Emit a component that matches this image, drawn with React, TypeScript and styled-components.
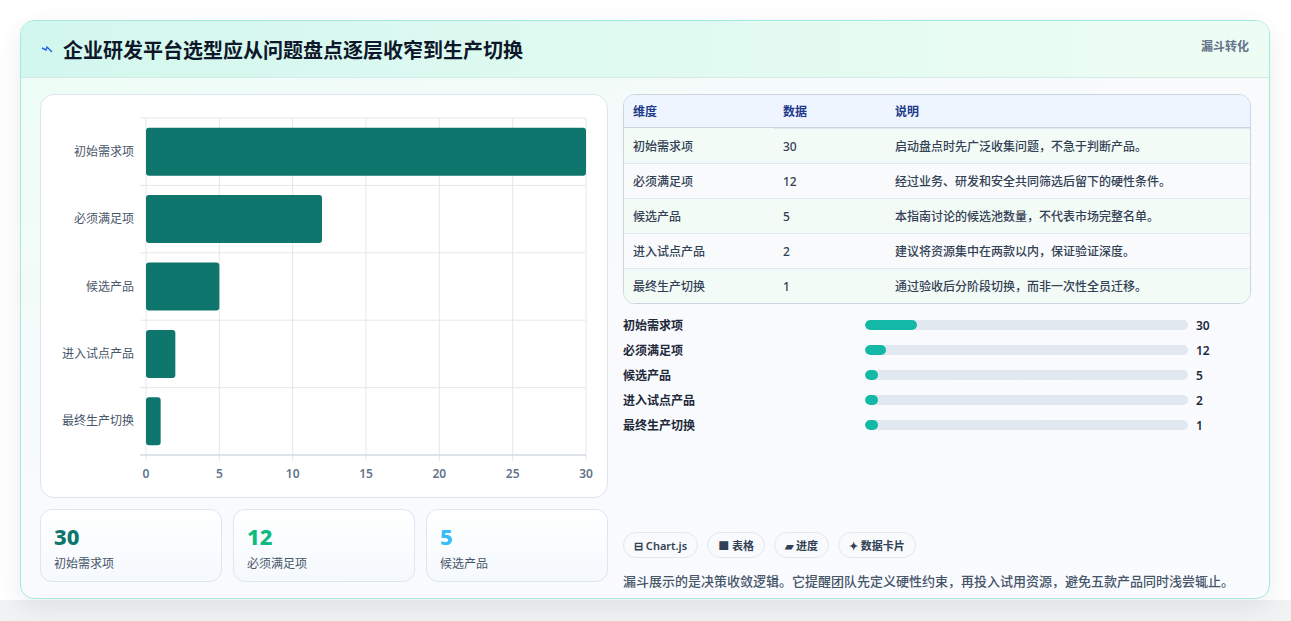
import styled, { createGlobalStyle } from 'styled-components'

const GlobalStyle = createGlobalStyle`
  body {
    margin: 0;
    background: #f1f2f4;
    font-family: "Noto Sans", "Noto Sans CJK SC", sans-serif;
  }
`

const rows = [
  { name: '初始需求项', value: 30, note: '启动盘点时先广泛收集问题，不急于判断产品。' },
  { name: '必须满足项', value: 12, note: '经过业务、研发和安全共同筛选后留下的硬性条件。' },
  { name: '候选产品', value: 5, note: '本指南讨论的候选池数量，不代表市场完整名单。' },
  { name: '进入试点产品', value: 2, note: '建议将资源集中在两款以内，保证验证深度。' },
  { name: '最终生产切换', value: 1, note: '通过验收后分阶段切换，而非一次性全员迁移。' },
]

const Page = styled.div`
  height: 621px;
  padding: 20px 20px 22px 20px;
  box-sizing: border-box;
  background: linear-gradient(#ffffff 0, #ffffff 600px, #f1f2f4 600px);
`

const Card = styled.div`
  width: 1250px;
  height: 579px;
  box-sizing: border-box;
  border: 1px solid #a7e8de;
  border-radius: 14px;
  background: linear-gradient(160deg, #ecfdf5 0%, #f8fafc 45%, #fafbff 100%);
  box-shadow: 0 8px 24px rgba(15, 23, 42, 0.08);
  overflow: hidden;
`

const Header = styled.div`
  height: 56px;
  display: flex;
  align-items: center;
  justify-content: space-between;
  padding: 0 20px;
  border-bottom: 1px solid #d4ebe6;
  background: linear-gradient(90deg, #d2f7ee, #eefdf4);
`

const Title = styled.h1`
  margin: 0;
  font-size: 20px;
  font-weight: 700;
  color: #0f172a;
  display: flex;
  align-items: center;
  gap: 10px;
`

const Tag = styled.span`
  align-self: flex-start;
  margin-top: 16px;
  font-size: 12px;
  font-weight: 700;
  color: #64748b;
`

const Body = styled.div`
  display: grid;
  grid-template-columns: 568px 628px;
  gap: 15px;
  padding: 16px 18px 0 19px;
`

const Col = styled.div`
  display: flex;
  flex-direction: column;
`

const ChartCard = styled.div`
  height: 404px;
  box-sizing: border-box;
  border: 1px solid #dbe5ef;
  border-radius: 14px;
  background: #fff;
`

const Kpis = styled.div`
  display: grid;
  grid-template-columns: repeat(3, 1fr);
  gap: 11px;
  margin-top: 11px;
`

const Kpi = styled.div`
  height: 73px;
  box-sizing: border-box;
  border: 1px solid #dbe7f3;
  border-radius: 12px;
  background: linear-gradient(#ffffff, #f5f9fd);
  padding: 12px 13px;
`

const KpiNum = styled.div<{ $c: string }>`
  font-size: 22px;
  font-weight: 800;
  line-height: 28px;
  color: ${p => p.$c};
`

const KpiLabel = styled.div`
  font-size: 12px;
  color: #475569;
  margin-top: 4px;
`

const Table = styled.table`
  width: 100%;
  border-collapse: separate;
  border-spacing: 0;
  border: 1px solid #cbd5e1;
  border-radius: 12px;
  overflow: hidden;
  font-size: 12px;
  background: #f8fafc;
`

const Th = styled.th`
  text-align: left;
  font-weight: 600;
  color: #1e3a8a;
  background: #eef5fe;
  height: 32px;
  padding: 0 9px;
  border-bottom: 1px solid #cbd5e1;
`

const Td = styled.td<{ $alt: boolean }>`
  height: 34px;
  padding: 0 9px;
  color: #334155;
  font-weight: 500;
  background: ${p => (p.$alt ? '#f8fafc' : '#f3fbf7')};
  border-top: 1px solid #e2e8f0;
`

const Progress = styled.div`
  margin-top: 12px;
  display: flex;
  flex-direction: column;
  gap: 7px;
`

const PRow = styled.div`
  display: grid;
  grid-template-columns: 234px 323px 1fr;
  column-gap: 8px;
  align-items: center;
  height: 18px;
  font-size: 12px;
  font-weight: 600;
  color: #1e293b;
`

const Track = styled.div`
  height: 10px;
  border-radius: 5px;
  background: #e2e8f0;
  overflow: hidden;
`

const Fill = styled.div`
  height: 100%;
  border-radius: 5px;
  background: #14b8a6;
`

const Chips = styled.div`
  display: flex;
  gap: 9px;
  margin-top: 98px;
`

const Chip = styled.span`
  height: 26px;
  box-sizing: border-box;
  padding: 0 10px;
  display: flex;
  align-items: center;
  gap: 4px;
  border: 1px solid #e2e8f0;
  border-radius: 13px;
  background: #f8fafc;
  font-size: 11px;
  font-weight: 600;
  color: #334155;
`

const Foot = styled.p`
  margin: 13px 0 0;
  font-size: 13px;
  font-weight: 500;
  color: #475569;
`

function BarChart() {
  const x0 = 105, x1 = 545, top = 23, bottom = 360
  const sx = (v: number) => x0 + ((x1 - x0) * v) / 30
  const band = (bottom - top) / 5
  return (
    <svg width="568" height="404" style={{ display: 'block' }}>
      {[0, 5, 10, 15, 20, 25, 30].map(t => (
        <g key={t}>
          <line x1={sx(t)} x2={sx(t)} y1={top} y2={bottom + 6} stroke="#e5e7eb" />
          <text x={sx(t)} y={383} textAnchor="middle" fontSize="12" fill="#64748b" fontWeight="600"
            fontFamily="Noto Sans, sans-serif">{t}</text>
        </g>
      ))}
      {[0, 1, 2, 3, 4, 5].map(i => (
        <line key={i} x1={x0 - 6} x2={x1} y1={top + band * i} y2={top + band * i} stroke="#e5e7eb" />
      ))}
      <line x1={x0 - 6} x2={x1} y1={bottom} y2={bottom} stroke="#cbd5e1" />
      {rows.map((r, i) => {
        const cy = top + band * i + band / 2
        return (
          <g key={r.name}>
            <rect x={x0} y={cy - 24} width={sx(r.value) - x0} height={48} rx="3" fill="#0f766e" />
            <text x={93} y={cy + 4} textAnchor="end" fontSize="12" fill="#475569"
              fontFamily="Noto Sans CJK SC, sans-serif">{r.name}</text>
          </g>
        )
      })}
    </svg>
  )
}

export default function App() {
  return (
    <Page>
      <GlobalStyle />
      <Card>
        <Header>
          <Title>
            <svg width="12" height="12" viewBox="0 0 12 12">
              <path d="M1 5 L5 7 L6 4 L11 9" stroke="#2563eb" strokeWidth="1.4" fill="none" />
            </svg>
            企业研发平台选型应从问题盘点逐层收窄到生产切换
          </Title>
          <Tag>漏斗转化</Tag>
        </Header>
        <Body>
          <Col>
            <ChartCard><BarChart /></ChartCard>
            <Kpis>
              <Kpi><KpiNum $c="#0f766e">30</KpiNum><KpiLabel>初始需求项</KpiLabel></Kpi>
              <Kpi><KpiNum $c="#10b981">12</KpiNum><KpiLabel>必须满足项</KpiLabel></Kpi>
              <Kpi><KpiNum $c="#38bdf8">5</KpiNum><KpiLabel>候选产品</KpiLabel></Kpi>
            </Kpis>
          </Col>
          <Col>
            <Table>
              <thead>
                <tr>
                  <Th style={{ width: 132 }}>维度</Th>
                  <Th style={{ width: 94 }}>数据</Th>
                  <Th>说明</Th>
                </tr>
              </thead>
              <tbody>
                {rows.map((r, i) => (
                  <tr key={r.name}>
                    <Td $alt={i % 2 === 1} style={i === 0 ? { borderTop: 'none' } : undefined}>{r.name}</Td>
                    <Td $alt={i % 2 === 1}>{r.value}</Td>
                    <Td $alt={i % 2 === 1}>{r.note}</Td>
                  </tr>
                ))}
              </tbody>
            </Table>
            <Progress>
              {rows.map(r => (
                <PRow key={r.name}>
                  <span>{r.name}</span>
                  <Track><Fill style={{ width: `${Math.max((r.value / 30) * 16, 4)}%` }} /></Track>
                  <span>{r.value}</span>
                </PRow>
              ))}
            </Progress>
            <Chips>
              <Chip>⊟ Chart.js</Chip>
              <Chip>■ 表格</Chip>
              <Chip>▰ 进度</Chip>
              <Chip>✦ 数据卡片</Chip>
            </Chips>
            <Foot>漏斗展示的是决策收敛逻辑。它提醒团队先定义硬性约束，再投入试用资源，避免五款产品同时浅尝辄止。</Foot>
          </Col>
        </Body>
      </Card>
    </Page>
  )
}
